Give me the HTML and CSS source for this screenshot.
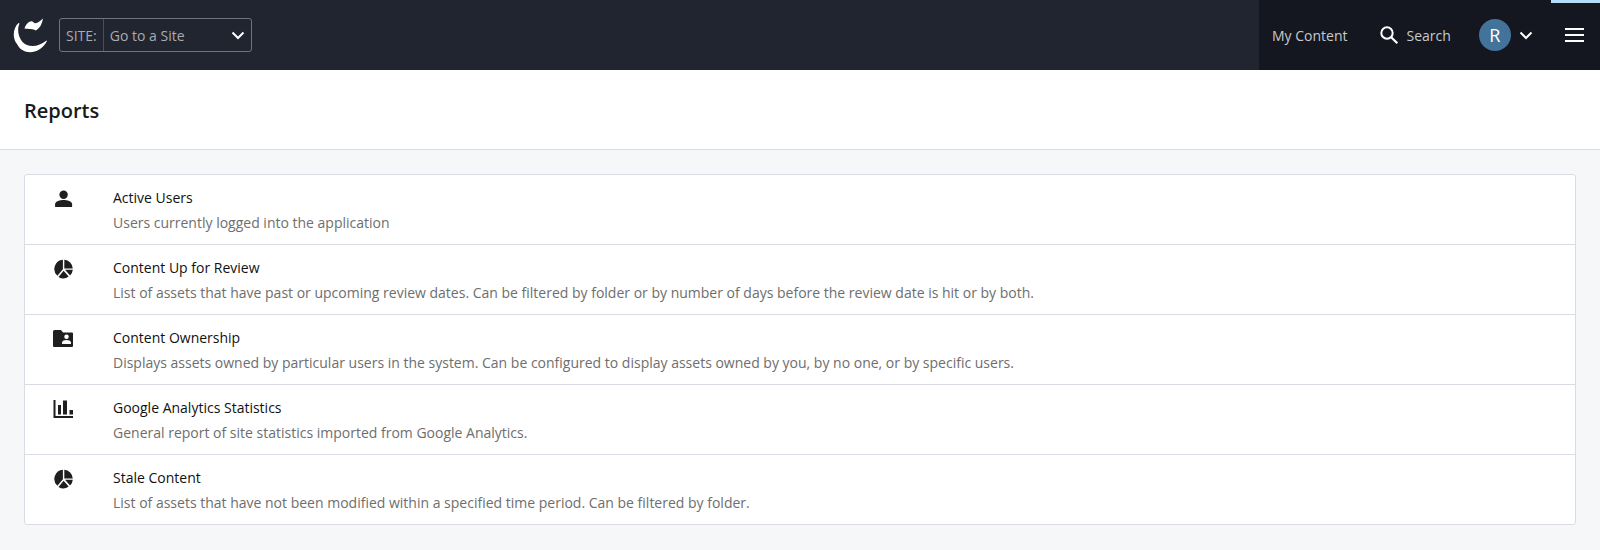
FILE: index.html
```html
<!DOCTYPE html>
<html lang="en">
<head>
  <meta charset="UTF-8" />
  <title>Reports</title>
  <link rel="stylesheet" href="styles.css">
</head>
<body>
  <header class="topbar">
    <div class="topbar-left">
      <svg class="logo" viewBox="0 0 36 36" width="36" height="36">
        <path fill="#fff" d="M5.500 6 C0 11 -1 21 4 27 C9 38 26 39 34 24 L33.500 23.500 C26 30 15 31 9.500 25 C5 20 4 12 6.500 6.500 Z"/>
        <path fill="#fff" d="M11.500 11.500 C12.500 8 15 4.500 18.500 4.200 C20 4.200 21 6.500 22.500 6.300 C25 6 27 4 30 1.500 C29 7 27 11 23 13.500 C20 11.500 16 12.500 11.500 11.500 Z"/>
      </svg>
      <div class="site-select">
        <span class="site-label">SITE:</span>
        <span class="site-value">Go to a Site</span>
        <svg class="chev" viewBox="0 0 14 9" width="14" height="9"><path d="M1.500 1.500 L7 7 L12.500 1.500" fill="none" stroke="#fff" stroke-width="2"/></svg>
      </div>
    </div>
    <div class="topbar-right">
      <div class="top-tab"></div>
      <a class="nav-link">My Content</a>
      <a class="nav-link search-link">
        <svg viewBox="0 0 20 20" width="20" height="20"><circle cx="8" cy="8" r="5.700" fill="none" stroke="#fff" stroke-width="2"/><path d="M12.200 12.200 L18.300 18.300" stroke="#fff" stroke-width="2.200"/></svg>
        Search
      </a>
      <div class="avatar">R</div>
      <svg class="chev user-chev" viewBox="0 0 14 9" width="14" height="9"><path d="M1.500 1.500 L7 7 L12.500 1.500" fill="none" stroke="#fff" stroke-width="2"/></svg>
      <div class="burger"><span></span><span></span><span></span></div>
    </div>
  </header>

  <div class="page-title"><h1>Reports</h1></div>

  <main class="content">
    <ul class="report-list">
      <li class="report">
        <div class="report-icon">
          <svg viewBox="-0.600 0 20 20" width="20" height="20"><circle cx="10" cy="5.800" r="4.200"/><path d="M1.500 18 V15.200 C1.500 12.200 6.500 11 10 11 C13.500 11 18.500 12.200 18.500 15.200 V18 Z"/></svg>
        </div>
        <div class="report-text"><div class="report-name">Active Users</div><div class="report-desc">Users currently logged into the application</div></div>
      </li>
      <li class="report">
        <div class="report-icon">
          <svg viewBox="-0.600 0 20 20" width="20" height="20"><path d="M10.700 0.800 A9.200 9.200 0 0 1 19.200 9.400 H10.700 Z"/><path d="M9.300 0.800 V10.200 L3.800 16.800 A9.200 9.200 0 0 1 9.300 0.800 Z"/><path d="M11.400 10.800 H19.200 A9.200 9.200 0 0 1 16.500 16.500 Z"/><path d="M10 11.700 L15.100 17.500 A9.200 9.200 0 0 1 4.900 17.900 Z"/></svg>
        </div>
        <div class="report-text"><div class="report-name">Content Up for Review</div><div class="report-desc">List of assets that have past or upcoming review dates. Can be filtered by folder or by number of days before the review date is hit or by both.</div></div>
      </li>
      <li class="report">
        <div class="report-icon">
          <svg viewBox="0 -1 20 20" width="20" height="20"><path fill-rule="evenodd" d="M1.500 0 H8 L10 2.500 H19 A1 1 0 0 1 20 3.500 V16 A1 1 0 0 1 19 17 H1 A1 1 0 0 1 0 16 V1.500 A1.500 1.500 0 0 1 1.500 0 Z M13.500 4.500 A2.200 2.200 0 1 0 13.501 9 A2.200 2.200 0 1 0 13.500 4.500 Z M9 14 H18 V12.500 C18 10.800 15.500 10 13.500 10 C11.500 10 9 10.800 9 12.500 Z"/></svg>
        </div>
        <div class="report-text"><div class="report-name">Content Ownership</div><div class="report-desc">Displays assets owned by particular users in the system. Can be configured to display assets owned by you, by no one, or by specific users.</div></div>
      </li>
      <li class="report">
        <div class="report-icon">
          <svg viewBox="0 -1 20 20" width="20" height="20"><path d="M0.500 0 H2.500 V16 H20 V18 H0.500 Z M5 5 H8 V14.500 H5 Z M10 0.500 H14 V14.500 H10 Z M16.500 10 H20 V14.500 H16.500 Z"/></svg>
        </div>
        <div class="report-text"><div class="report-name">Google Analytics Statistics</div><div class="report-desc">General report of site statistics imported from Google Analytics.</div></div>
      </li>
      <li class="report">
        <div class="report-icon">
          <svg viewBox="-0.600 0 20 20" width="20" height="20"><path d="M10.700 0.800 A9.200 9.200 0 0 1 19.200 9.400 H10.700 Z"/><path d="M9.300 0.800 V10.200 L3.800 16.800 A9.200 9.200 0 0 1 9.300 0.800 Z"/><path d="M11.400 10.800 H19.200 A9.200 9.200 0 0 1 16.500 16.500 Z"/><path d="M10 11.700 L15.100 17.500 A9.200 9.200 0 0 1 4.900 17.900 Z"/></svg>
        </div>
        <div class="report-text"><div class="report-name">Stale Content</div><div class="report-desc">List of assets that have not been modified within a specified time period. Can be filtered by folder.</div></div>
      </li>
    </ul>
  </main>
</body>
</html>
```

FILE: styles.css
```css
* {
  box-sizing: border-box;
}

body {
  margin: 0;
  background: #f6f7f9;
  font-family: "Open Sans", sans-serif;
  font-size: 14px;
  color: #1a1a1a;
}

.topbar {
  display: flex;
  justify-content: space-between;
  height: 70px;
  background: #212530;
}

.topbar-left {
  display: flex;
  align-items: center;
  padding-left: 13px;
}

.logo {
  margin-right: 10px;
}

.site-select {
  display: flex;
  align-items: center;
  width: 193px;
  height: 34px;
  border: 1px solid #6f737b;
  border-radius: 3px;
  color: #a9abb0;
}

.site-label {
  display: flex;
  align-items: center;
  height: 100%;
  padding: 0 6px 0 6px;
  border-right: 1px solid #4a4e5a;
}

.site-value {
  flex: 1;
  padding-left: 6px;
}

.site-select .chev {
  margin-right: 6px;
}

.topbar-right {
  position: relative;
  display: flex;
  align-items: center;
  width: 341px;
  padding-left: 13px;
  background: #14171f;
  color: #c8c9cc;
}

/* light tab sitting on the top edge */
.top-tab {
  position: absolute;
  top: 0;
  right: 0;
  width: 49px;
  height: 3px;
  background: #b5dcf7;
}

.search-link {
  display: flex;
  align-items: center;
  gap: 8px;
  margin-left: 31px;
}

.avatar {
  display: flex;
  align-items: center;
  justify-content: center;
  width: 32px;
  height: 32px;
  margin-left: 28px;
  border-radius: 50%;
  background: #43729b;
  color: #fff;
  font-size: 18px;
}

.user-chev {
  margin-left: 8px;
}

.burger {
  display: flex;
  flex-direction: column;
  gap: 4px;
  width: 19px;
  margin-left: 32px;
}

.burger span {
  height: 2px;
  background: #fff;
}

.page-title {
  height: 80px;
  padding: 0 24px;
  background: #fff;
  border-bottom: 1px solid #d9dde3;
}

.page-title h1 {
  margin: 0;
  font-size: 20px;
  font-weight: 600;
  line-height: 82px;
}

.content {
  padding: 24px 24px 0;
}

.report-list {
  margin: 0;
  padding: 0;
  list-style: none;
  background: #fff;
  border: 1px solid #d9dde3;
  border-radius: 3px;
}

.report {
  display: flex;
  height: 70px;
  border-bottom: 1px solid #d9dde3;
}

.report:last-child {
  height: 69px;
  border-bottom: none;
}

.report-icon {
  width: 88px;
  padding: 14px 0 0 28px;
}

.report-icon svg {
  display: block;
  fill: #1f1f1f;
}

.report-text {
  padding-top: 13px;
}

.report-name {
  line-height: 20px;
  color: #111;
}

.report-desc {
  margin-top: 5px;
  line-height: 20px;
  color: #6e6e6e;
}
```
